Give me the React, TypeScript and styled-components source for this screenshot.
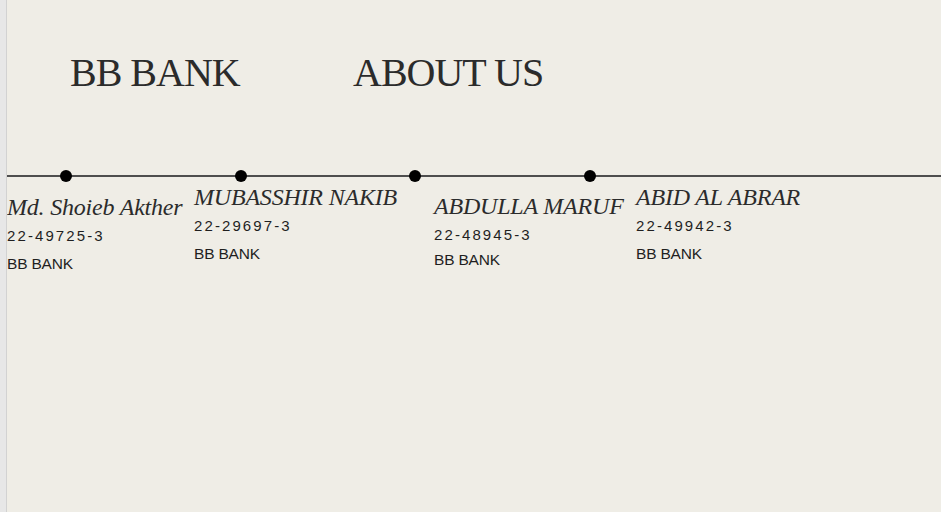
import styled, { createGlobalStyle } from "styled-components";

const GlobalStyle = createGlobalStyle`
  html, body {
    margin: 0;
    padding: 0;
    background: #e7e7e7;
  }
  body {
    font-family: "Liberation Serif", serif;
    color: #2b2b2b;
  }
`;

const Page = styled.div`
  margin-left: 6px;
  border-left: 1px solid #d2d2d2;
  background: #efede6;
  min-height: 100vh;
  overflow: hidden;
`;

const Header = styled.header`
  display: flex;
  align-items: baseline;
  padding: 49px 0 0 63px;
  height: 121px;
`;

const NavTitle = styled.h1<{ $width?: number }>`
  margin: 0;
  width: ${(p) => (p.$width ? `${p.$width}px` : "auto")};
  font-family: "Liberation Serif", serif;
  font-weight: 400;
  font-size: 40px;
  letter-spacing: -1px;
  color: #2b2b2b;
`;

const Track = styled.div`
  display: flex;
  align-items: center;
  gap: 162.6px;
  height: 12px;
  padding-left: 53px;
  background: linear-gradient(#4e4e4e, #4e4e4e) left center / 100% 2px no-repeat;
`;

const Dot = styled.span`
  width: 12px;
  height: 12px;
  border-radius: 50%;
  background: #000;
`;

const Members = styled.section`
  display: grid;
  grid-template-columns: 187px 240px 202px 1fr;
  align-items: start;
`;

const Member = styled.div<{ $drop: number }>`
  display: flex;
  flex-direction: column;
  margin-top: ${(p) => p.$drop + 2}px;
`;

const Name = styled.h3`
  margin: 0;
  font-family: "Liberation Serif", serif;
  font-style: italic;
  font-weight: 400;
  font-size: 24px;
  letter-spacing: -0.2px;
  white-space: nowrap;
  color: #2b2b2b;
`;

const Id = styled.span`
  margin-top: 6px;
  font-family: "Liberation Sans", Arial, sans-serif;
  font-size: 15px;
  letter-spacing: 2.1px;
  color: #1f1f1f;
`;

const Bank = styled.span<{ $tight?: boolean }>`
  margin-top: ${(p) => (p.$tight ? 8 : 11)}px;
  font-family: "Liberation Sans", Arial, sans-serif;
  font-size: 15.5px;
  letter-spacing: -0.2px;
  color: #1f1f1f;
`;

const team = [
  { name: "Md. Shoieb Akther", id: "22-49725-3", drop: 10, tight: false },
  { name: "MUBASSHIR NAKIB", id: "22-29697-3", drop: 0, tight: false },
  { name: "ABDULLA MARUF", id: "22-48945-3", drop: 9, tight: true },
  { name: "ABID AL ABRAR", id: "22-49942-3", drop: 0, tight: false },
];

function App() {
  return (
    <>
      <GlobalStyle />
      <Page>
        <Header>
          <NavTitle $width={283}>BB BANK</NavTitle>
          <NavTitle>ABOUT US</NavTitle>
        </Header>
        <Track>
          {team.map((m) => (
            <Dot key={m.id} />
          ))}
        </Track>
        <Members>
          {team.map((m) => (
            <Member key={m.id} $drop={m.drop}>
              <Name>{m.name}</Name>
              <Id>{m.id}</Id>
              <Bank $tight={m.tight}>BB BANK</Bank>
            </Member>
          ))}
        </Members>
      </Page>
    </>
  );
}

export default App;
